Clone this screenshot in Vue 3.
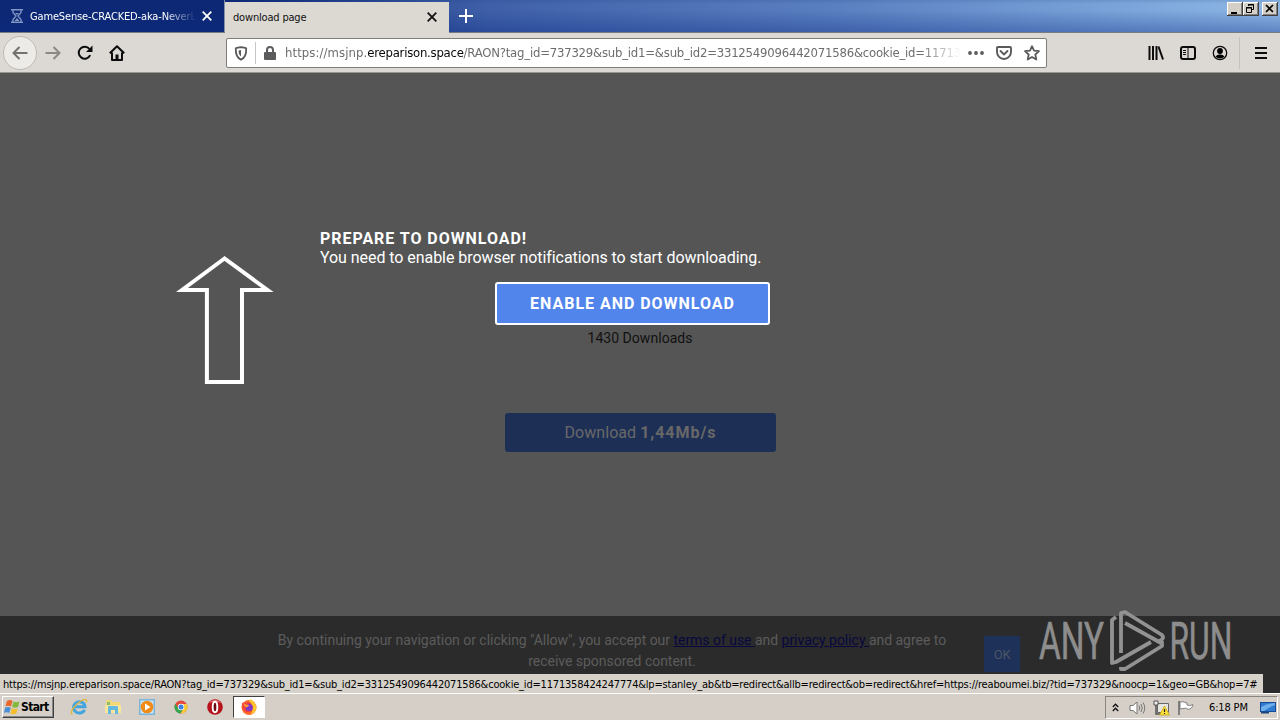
<script setup>
const watermarkLeft = 'ANY'
const watermarkRight = 'RUN'
</script>

<template>
  <div class="screen">
    <header class="tabs">
      <div class="tab idle">
        <svg class="hourglass" width="12" height="14" viewBox="0 0 12 14" fill="none" stroke="#8295c4">
          <path d="M0 .8h12M0 13.2h12" stroke-width="1.5" />
          <path d="M2 1v2.5L5 7 2 10.500V13M10 1v2.500L7 7l3 3.500V13" stroke-width="1.3" />
          <path d="M4 4h4L6 6zM3.500 12L6 9l2.500 3z" fill="#8295c4" stroke="none" />
        </svg>
        <span class="tab-title fade">GameSense-CRACKED-aka-NeverL</span>
        <svg class="x" width="10" height="10" viewBox="0 0 10 10" stroke="#fff" stroke-width="1.8"><path d="M.7.7l8.600 8.600M9.300.7L.7 9.300" /></svg>
      </div>
      <div class="tab active">
        <span class="tab-title dark">download page</span>
        <svg class="x" width="10" height="10" viewBox="0 0 10 10" stroke="#111" stroke-width="1.8"><path d="M.7.7l8.600 8.600M9.300.7L.7 9.300" /></svg>
      </div>
      <svg class="plus" width="14" height="14" viewBox="0 0 14 14" stroke="#fff" stroke-width="2"><path d="M7 0v14M0 7h14" /></svg>
      <div class="winbuttons">
        <svg width="16" height="14" viewBox="0 0 16 14"><path fill="#404040" d="M0 0h16v14H0z" /><path fill="#fff" d="M0 0h15v13H0z" /><path fill="#808080" d="M1 1h14v12H1z" /><path fill="#d4d0c8" d="M1 1h13v11H1z" /><path fill="#000" d="M4 10h6v2H4z" /></svg>
        <svg width="16" height="14" viewBox="0 0 16 14"><path fill="#404040" d="M0 0h16v14H0z" /><path fill="#fff" d="M0 0h15v13H0z" /><path fill="#808080" d="M1 1h14v12H1z" /><path fill="#d4d0c8" d="M1 1h13v11H1z" /><path d="M5.500 4V2.500h5v5H9M5 3h6M3.500 5.500h5v5h-5zM3 6h6" fill="none" stroke="#000" /></svg>
        <svg class="close" width="16" height="14" viewBox="0 0 16 14"><path fill="#404040" d="M0 0h16v14H0z" /><path fill="#fff" d="M0 0h15v13H0z" /><path fill="#808080" d="M1 1h14v12H1z" /><path fill="#d4d0c8" d="M1 1h13v11H1z" /><path d="M4 3l7 7M11 3l-7 7" stroke="#000" stroke-width="1.700" /></svg>
      </div>
    </header>

    <nav class="toolbar">
      <div class="back">
        <svg width="16" height="14" viewBox="0 0 16 14" fill="none" stroke="#73716d" stroke-width="2"><path d="M15.500 7H1.500M7.500 1l-6 6 6 6" /></svg>
      </div>
      <svg class="fwd" width="16" height="14" viewBox="0 0 16 14" fill="none" stroke="#8b8985" stroke-width="2"><path d="M.5 7h14M8.500 1l6 6-6 6" /></svg>
      <svg class="reload" width="16" height="16" viewBox="0 0 16 16" fill="none" stroke="#0c0c0d" stroke-width="2"><path d="M13.200 10.200A6 6 0 1 1 12.500 4" /><path d="M15.500.5v6.500H9z" fill="#0c0c0d" stroke="none" /></svg>
      <svg class="home" width="16" height="16" viewBox="0 0 16 16" fill="none" stroke="#0c0c0d" stroke-width="2" stroke-linejoin="round"><path d="M.8 8.300L8 1.200l7.200 7.100M3 7.500V15h10V7.500" /><path d="M6.500 9.500h3V15h-3z" fill="#0c0c0d" stroke="none" /></svg>
      <div class="urlbar">
        <svg class="shield" width="14" height="15" viewBox="0 0 14 15" fill="none" stroke="#5a5a5c" stroke-width="1.8"><path d="M7 1.100c2 .2 4 .6 5.200 1.200.3 6-1 9.500-5.200 11.500C2.800 11.800 1.500 8.300 1.800 2.300 3 1.700 5 1.300 7 1.100z" /><path d="M7 4v6.500C5 9 4.600 7 4.600 4.500z" fill="#5a5a5c" stroke="none" /></svg>
        <i class="split"></i>
        <svg class="lock" width="12" height="14" viewBox="0 0 12 14"><path d="M3 7V4a3 3 0 0 1 6 0v3" fill="none" stroke="#5c5c5e" stroke-width="2" /><rect y="6" width="12" height="8" rx="1" fill="#5c5c5e" /></svg>
        <span class="url"><span class="scheme">https://msjnp.</span><b>ereparison.space</b>/RAON?tag_id=737329&amp;sub_id1=&amp;sub_id2=3312549096442071586&amp;cookie_id=11713</span>
        <svg class="dots" width="16" height="4" viewBox="0 0 16 4" fill="#5a5a5c"><circle cx="2" cy="2" r="1.900" /><circle cx="8" cy="2" r="1.900" /><circle cx="14" cy="2" r="1.900" /></svg>
        <svg class="pocket" width="16" height="14" viewBox="0 0 16 14" fill="none" stroke="#5a5a5c" stroke-width="1.900"><path d="M2 1h12q1 0 1 1v4a7 7 0 0 1-14 0V2q0-1 1-1z" /><path d="M4.500 5L8 8.400 11.500 5" stroke-linecap="round" /></svg>
        <svg class="star" width="16" height="16" viewBox="0 0 16 16" fill="none" stroke="#5a5a5c" stroke-width="1.800" stroke-linejoin="round"><path d="M8 1.200l2 4.500 5 .5-3.700 3.300 1 5L8 12l-4.300 2.500 1-5L1 6.200l5-.5z" /></svg>
      </div>
      <div class="tools">
        <svg width="16" height="14" viewBox="0 0 16 14" stroke="#0c0c0d" stroke-width="2"><path d="M1.500 0v14M5 0v14M8.500 0v14" /><path d="M10.500.5L15 13.500" /></svg>
        <svg width="16" height="14" viewBox="0 0 16 14" fill="none" stroke="#0c0c0d"><rect x="1" y="1" width="14" height="12" rx="2" stroke-width="2" /><path d="M8 1v12M3 4.500h3M3 6.500h3M3 8.500h3" /></svg>
        <svg width="16" height="16" viewBox="0 0 16 16"><circle cx="8" cy="8" r="6.700" fill="none" stroke="#0c0c0d" stroke-width="1.300" /><circle cx="8" cy="6" r="2.900" /><path d="M3.500 11.500Q5.500 9 8 9.500q2.500-.5 4.500 2-1.800 2-4.500 2t-4.500-2z" /></svg>
        <i class="sep"></i>
        <svg width="12" height="12" viewBox="0 0 12 12" stroke="#0c0c0d" stroke-width="2"><path d="M0 1h12M0 6h12M0 11h12" /></svg>
      </div>
    </nav>

    <main class="page">
      <section class="prompt">
        <svg class="arrow" width="98" height="130" viewBox="0 0 98 130" fill="none" stroke="#fff" stroke-width="4"><path d="M48.500 3.500L6 35h24.900v92H66V35h25.500z" /></svg>
        <div class="message">
          <h1>PREPARE TO DOWNLOAD!</h1>
          <p>You need to enable browser notifications to start downloading.</p>
        </div>
      </section>
      <button class="enable"><span>ENABLE AND DOWNLOAD</span></button>
      <div class="count"><span>1430 Downloads</span></div>
      <button class="download"><span>Download <b>1,44Mb/s</b></span></button>
      <footer class="consent">
        <p><span class="l1">By continuing your navigation or clicking "Allow", you accept our <a>terms of use </a>and <a>privacy policy </a>and agree to</span><br /><span class="l2">receive sponsored content.</span></p>
        <div class="ok">OK</div>
      </footer>
      <div class="watermark">
        <svg width="200" height="64" viewBox="0 0 200 64" overflow="visible">
          <g fill="#8d8d8d" stroke="#8d8d8d" stroke-width=".6" font-family="Roboto, sans-serif" font-size="51">
            <text x="1" y="49.500" textLength="65" lengthAdjust="spacingAndGlyphs">{{ watermarkLeft }}</text>
            <text x="131.500" y="49.500" textLength="63" lengthAdjust="spacingAndGlyphs">{{ watermarkRight }}</text>
          </g>
          <g fill="none" stroke="#929292" stroke-width="3.800" stroke-linejoin="round">
            <path d="M78 8l-4 3v43l4-1 35-20" />
            <path d="M83 44V4l4-1 37 23q3 4-3 6M87 14l36 20" />
            <path d="M83 58v2h4l37-23v-5" />
          </g>
        </svg>
      </div>
      <div class="status"><span>https://msjnp.ereparison.space/RAON?tag_id=737329&amp;sub_id1=&amp;sub_id2=3312549096442071586&amp;cookie_id=1171358424247774&amp;lp=stanley_ab&amp;tb=redirect&amp;allb=redirect&amp;ob=redirect&amp;href=https://reaboumei.biz/?tid=737329&amp;noocp=1&amp;geo=GB&amp;hop=7#</span></div>
    </main>

    <div class="taskbar">
      <div class="start">
        <svg width="16" height="16" viewBox="0 0 16 16"><path d="M3 2q3-2 5.500 0L7 7.500Q4.500 6 1.500 7.200z" fill="#e8672a" /><path d="M9.500 2.500q3 1.500 6 0L14 8q-3 1.500-5.800 0z" fill="#83b83d" /><path d="M1.200 8.500q3-1.300 5.500.3L5.300 14Q3 12.500 0 13.800z" fill="#4a8fd6" /><path d="M7.800 9.200q3 1.500 6 .2L12.300 14.500q-3 1.500-6 0z" fill="#f3bd2e" /></svg>
        <b>Start</b>
      </div>
      <div class="quick">
        <svg width="18" height="18" viewBox="0 0 18 18" fill="none"><path d="M14.500 11.800A5.700 5.700 0 1 1 15 8.800H4.500" stroke="#43a5df" stroke-width="3" /><path d="M2.500 16Q-.5 15.500 3.500 10 8 4 13 1.800 17.500.5 16.500 4.500" stroke="#dfb63b" stroke-width="1.300" /></svg>
        <svg width="18" height="18" viewBox="0 0 18 18"><path d="M2 3q0-1 1-1h4l1.500 2H15q1 0 1 1v9H2z" fill="#f4d875" /><path d="M3 4h3v5H3z" fill="#87be70" /><path d="M1 7h16v8H1z" fill="#f8e59a" /><path d="M4 9q0-1 1-1h8q1 0 1 1v7h-3v-4H7v4H4z" fill="#65b8e0" /></svg>
        <svg width="18" height="18" viewBox="0 0 18 18"><rect x="1" y="1" width="16" height="16" fill="#78b5dd" /><rect x="2.500" y="2.500" width="13" height="13" fill="#cce4f3" /><circle cx="9" cy="9" r="6.300" fill="#ef8b16" /><path d="M7 5.500l5.500 3.500L7 12.500z" fill="#fff" /></svg>
        <svg width="18" height="18" viewBox="0 0 18 18"><circle cx="9" cy="9" r="6.500" fill="#e5493a" /><path d="M3.300 5.800A6.500 6.500 0 0 0 8.500 15.500L11.600 10.500 6.200 10.300z" fill="#37a650" /><path d="M9 6h5.800A6.500 6.500 0 0 1 8.500 15.500L11.600 10.500z" fill="#f5cc37" /><circle cx="9" cy="9" r="3.200" fill="#fff" /><circle cx="9" cy="9" r="2.500" fill="#3e7fe0" /></svg>
        <svg width="18" height="18" viewBox="0 0 18 18"><circle cx="9" cy="9" r="7.800" fill="#b5121b" /><path d="M3 5a7.500 7.500 0 0 1 12 0q-6-3-12 0z" fill="#e8757a" /><ellipse cx="9" cy="9" rx="2.300" ry="5.300" fill="#6e0912" stroke="#fff" stroke-width="1.900" /></svg>
      </div>
      <div class="running">
        <svg width="18" height="18" viewBox="0 0 18 18"><circle cx="9" cy="9.500" r="7.500" fill="#ff6b27" /><path d="M10 1q6 3 6.500 9-1 5-6 6.500 4-5 0-8-3-3 -.5-7.500z" fill="#ffc72e" /><path d="M2 5q2-1 4 0 3-2 5 0l2 4q0 3-3 5-5 1-7-3z" fill="#ef3f43" /><circle cx="9.200" cy="9.500" r="3.500" fill="#7b3ccb" /><path d="M3 5q3 2 6 2-1 3-4 2z" fill="#ff982b" /></svg>
      </div>
      <div class="tray">
        <svg class="chev" width="7" height="9" viewBox="0 0 7 9" fill="none" stroke="#111" stroke-width="1.300"><path d="M.8 4l2.700-2.800L6.200 4M.8 8l2.700-2.800L6.200 8" /></svg>
        <svg class="sound" width="17" height="16" viewBox="0 0 17 16" fill="none" stroke="#777"><path d="M1 5.500h3L8 2v12l-4-3.500H1z" fill="#fff" /><path d="M10 5.500q1.500 2.500 0 5M12 4q2.500 4 0 8M14 2.500q3.500 5.500 0 11" /></svg>
        <svg class="net" width="17" height="16" viewBox="0 0 17 16"><path d="M4.500 3.500h11v9h-11z" fill="#e6e6e0" stroke="#666" /><path d="M1 1h4v4H1z" fill="#eee" stroke="#555" /><path d="M3 5v9h5" fill="none" stroke="#555" stroke-width="1.500" /><path d="M11.500 6l5 9h-10z" fill="#ffe13b" stroke="#c69d00" stroke-width=".7" /><path d="M11.500 9v3M11.500 13v1" stroke="#222" stroke-width="1.200" /></svg>
        <svg class="flag" width="17" height="16" viewBox="0 0 17 16"><path d="M3 2q3-1 6 .8h1V5q2 1.300 6-.3-1 4.500-5 4.700-1-1.500-3-1.200L3 9z" fill="#fff" stroke="#777" stroke-width=".9" /><path d="M2 1v14" stroke="#666" stroke-width="1.500" /></svg>
        <span class="time">6:18 PM</span>
        <svg width="16" height="13" viewBox="0 0 16 13"><path d="M0 1h16v10H0z" fill="#174c95" /><path d="M1 2h14v8H1z" fill="#2f7bd1" /><path d="M1 6q7-4 14-4v2Q9 6 4 10H1z" fill="#6faee9" /><path d="M1 11h8v1.500H1z" fill="#1e437b" /></svg>
      </div>
    </div>
  </div>
</template>

<style>
html, body { margin: 0; overflow: hidden; }
</style>

<style scoped>
* { box-sizing: border-box; }
svg { display: block; flex: none; }
.screen { width: 1280px; height: 720px; display: flex; flex-direction: column; overflow: hidden; font-family: "DejaVu Sans Condensed", "DejaVu Sans", sans-serif; font-stretch: condensed; color: #000; }
.tabs { height: 33px; flex: none; display: flex; background: linear-gradient(rgba(10,40,110,.12), transparent 4px, transparent 10px, rgba(10,40,130,.36)), linear-gradient(90deg, #0d2975 0, #0d2975 18%, #3f60a8 38%, #5a7fc0 65%, #7ba5da 88%, #8fb8e6 100%); border-bottom: 1px solid #777b83; }
.tab { height: 33px; display: flex; align-items: center; flex: none; }
.idle { width: 225px; padding-left: 11px; border-right: 1px solid #8590ad; height: 32px; }
.tab-title { font-size: 11px; white-space: nowrap; overflow: hidden; line-height: 17px; }
.fade { width: 170px; margin-left: 7px; color: #fff; letter-spacing: -.15px; -webkit-mask-image: linear-gradient(90deg, #000 135px, transparent 166px); mask-image: linear-gradient(90deg, #000 135px, transparent 166px); }
.idle .x { margin-left: 2px; }
.active { width: 224px; margin-top: 2px; height: 31px; background: #dcd9d3; padding: 0 0 1px 8px; }
.active .tab-title { width: 193px; color: #111; letter-spacing: -.18px; }
.active .x { margin-left: 1px; }
.plus { margin: 9px 0 0 10px; }
.winbuttons { display: flex; margin: 2px 2px 0 auto; }
.winbuttons .close { margin-left: 3px; }
.toolbar { height: 40px; padding-top: 1px; flex: none; display: flex; align-items: center; background: #dcd8d3; border-bottom: 1px solid #99968f; }
.back { width: 34px; height: 34px; margin-left: 3px; border: 1px solid #bdbab5; border-radius: 50%; background: #edebe7; display: flex; align-items: center; justify-content: center; }
.fwd { margin-left: 8px; }
.reload { margin-left: 16px; }
.home { margin-left: 16px; }
.urlbar { width: 821px; height: 30px; margin-left: 101px; background: #fff; border: 1px solid #7e7d7a; border-radius: 2px; display: flex; align-items: center; }
.shield { margin-left: 7px; }
.split { width: 1px; height: 22px; background: #c5c5c5; margin-left: 7px; }
.lock { margin-left: 8px; }
.url { width: 676px; margin-left: 9px; overflow: hidden; white-space: nowrap; font-size: 13px; line-height: 20px; color: #6d6d6d; letter-spacing: -.22px; -webkit-mask-image: linear-gradient(90deg, #000 635px, transparent 676px); mask-image: linear-gradient(90deg, #000 635px, transparent 676px); }
.scheme { letter-spacing: .08px; }
.url b { font-weight: 400; color: #080808; letter-spacing: -.25px; }
.dots { margin-left: 7px; }
.pocket { margin-left: 12px; }
.star { margin-left: 12px; }
.tools { margin-left: 101px; display: flex; align-items: center; gap: 16px; }
.sep { width: 1px; height: 32px; background: #c5c2bc; margin: 0 -1px 0 -5px; }
.page { height: 620px; flex: none; position: relative; background: #555; font-family: Roboto, sans-serif; font-stretch: normal; }
.prompt { display: flex; height: 209px; padding-left: 176px; }
.arrow { margin-top: 182px; height: 130px; }
.message { margin: 156px 0 0 46px; color: #fff; font-size: 16px; line-height: 19px; white-space: nowrap; }
.message h1 { margin: 0; font-size: 16px; font-weight: 700; letter-spacing: .95px; }
.message p { margin: 0; letter-spacing: -.055px; }
button { display: flex; align-items: center; justify-content: center; font-family: inherit; padding: 0; }
.enable { width: 275px; height: 43px; margin-left: 495px; border: 2px solid #fff; border-radius: 3px; background: #5285ec; color: #fff; font-size: 16px; font-weight: 700; letter-spacing: .97px; }
.count { height: 26px; text-align: center; font-size: 14px; line-height: 26px; color: #111; letter-spacing: .04px; }
.download { width: 271px; height: 39px; margin: 62px 0 0 505px; border: 0; border-radius: 3px; background: #1e2f56; color: #686868; font-size: 16px; letter-spacing: .05px; }
.download b { letter-spacing: .95px; }
.consent { height: 77px; margin-top: 164px; background: #2b2b2b; display: flex; color: #5c5c5c; }
.consent p { width: 724px; margin: 14px 0 0 250px; text-align: center; font-size: 14px; line-height: 21px; white-space: nowrap; letter-spacing: -.03px; }
.consent a { color: #08083e; text-decoration: underline; white-space: pre; }
.ok { width: 36px; height: 36px; margin: 20px 0 0 10px; background: #1e3159; color: #4c5566; font-size: 13px; letter-spacing: -.3px; display: flex; align-items: center; justify-content: center; }
.watermark { position: absolute; left: 1038px; top: 536px; }
.status { position: absolute; left: 0; top: 601px; width: 1263px; height: 19px; background: #d6d2ca; padding-left: 3px; font: 11px/21px "DejaVu Sans Condensed", "DejaVu Sans", sans-serif; font-stretch: condensed; white-space: nowrap; overflow: hidden; letter-spacing: -.193px; }
.taskbar { height: 27px; flex: none; display: flex; background: #d5cfc8; border-top: 1px solid #fff; }
.start { width: 52px; height: 22px; margin: 2px 0 0 2px; display: flex; align-items: center; gap: 1px; padding-left: 1px; border: 1px solid; border-color: #fff #404040 #404040 #fff; box-shadow: inset -1px -1px #888; font-size: 12px; letter-spacing: -.65px; }
.quick { display: flex; gap: 16px; margin: 4px 0 0 16px; }
.running { width: 32px; height: 22px; margin: 2px 0 0 9px; border: 1px solid; border-color: #404040 #fff #fff #404040; background: #fff; display: flex; align-items: center; justify-content: center; }
.tray { width: 173px; height: 23px; margin: 2px 2px 0 auto; border: 1px solid; border-color: #898680 #fff #fff #898680; display: flex; align-items: center; padding-left: 6px; }
.sound { margin-left: 10px; }
.net { margin-left: 7px; }
.flag { margin-left: 7px; }
.time { width: 42px; margin: 0 9px 0 15px; font-size: 11px; letter-spacing: -.15px; white-space: nowrap; }
</style>
